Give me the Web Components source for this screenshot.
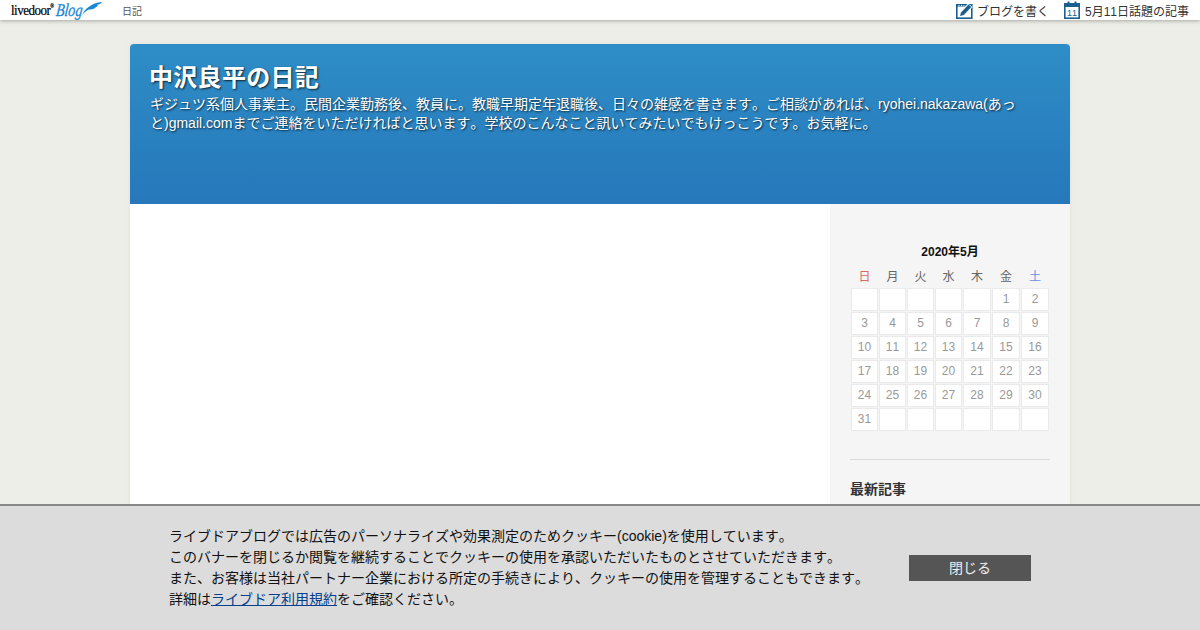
<!DOCTYPE html>
<html lang="ja">
<head>
<meta charset="utf-8">
<title>中沢良平の日記</title>
<style>
html, body { margin: 0; height: 100%; overflow: hidden; }
body {
    background: #eeeee8;
    font-family: "Liberation Sans", "Noto Sans CJK JP", sans-serif;
    font-kerning: none;
    color: #333;
}
</style>
</head>
<body>
<top-bar></top-bar>
<blog-page>
    <blog-header slot="header" title="中沢良平の日記">ギジュツ系個人事業主。民間企業勤務後、教員に。教職早期定年退職後、日々の雑感を書きます。ご相談があれば、ryohei.nakazawa(あっと)gmail.comまでご連絡をいただければと思います。学校のこんなこと訊いてみたいでもけっこうです。お気軽に。</blog-header>
    <blog-sidebar slot="side">
        <blog-calendar month="2020年5月" offset="5" days="31"></blog-calendar>
        <recent-title>最新記事</recent-title>
    </blog-sidebar>
</blog-page>
<cookie-banner>
    ライブドアブログでは広告のパーソナライズや効果測定のためクッキー(cookie)を使用しています。<br>
    このバナーを閉じるか閲覧を継続することでクッキーの使用を承認いただいたものとさせていただきます。<br>
    また、お客様は当社パートナー企業における所定の手続きにより、クッキーの使用を管理することもできます。<br>
    詳細は<a href="#" style="color:#003f8e">ライブドア利用規約</a>をご確認ください。
</cookie-banner>
<script>
class TopBar extends HTMLElement {
    constructor() {
        super();
        this.attachShadow({ mode: "open" });
    }
    connectedCallback() {
        this.shadowRoot.innerHTML = `
<style>
:host {
    display: flex;
    align-items: center;
    height: 20px;
    background: #fff;
    box-shadow: 0 1px 4px rgba(0, 0, 0, 0.3);
    position: relative;
    font-size: 12px;
    color: #333;
}
.logo { display: flex; align-items: center; margin-left: 11px; width: 111px; }
.ld { width: 45px; font-family: "Liberation Serif", serif; font-size: 13px; color: #000; letter-spacing: -0.5px; -webkit-text-stroke: 0.2px #000; transform: scaleY(1.15); }
.ld sup { font-size: 5px; line-height: 0; }
.bl { width: 26px; font-family: "Liberation Serif", serif; font-style: italic; font-size: 18px; color: #1a86d6; -webkit-text-stroke: 0.3px #1a86d6; transform: scaleX(0.78) skewX(-8deg); transform-origin: left center; }
.crumb { font-size: 10px; color: #555; }
.right { margin-left: auto; display: flex; align-items: center; gap: 15px; padding-right: 11px; }
.act { display: flex; align-items: center; gap: 4px; }
.act + .act { gap: 5px; }
svg { display: block; }
.logo svg { margin-top: -4px; }
</style>
<div class="logo">
    <span class="ld">livedoor<sup>®</sup></span><span class="bl">Blog</span>
    <svg width="20" height="13" viewBox="0 0 20 13"><path d="M0 13C3 7 9 1 20 0c-1 2-3 2.500-4.500 2.500 .5 1 0 2-2 3-1 1.500-4 2-6.500 2-2 1-4.500 2.500-7 5.500z" fill="#1a86d6"/></svg>
</div>
<span class="crumb">日記</span>
<div class="right">
    <div class="act">
        <svg width="17" height="17" viewBox="0 0 17 17"><rect x="0.8" y="2.8" width="15" height="13.400" fill="#fff" stroke="#1a5f8f" stroke-width="1.6"/><path d="M1 2h11v2.500H1z" fill="#1a5f8f"/><path d="M3 4v-1M5.500 4v-1M8 4v-1" stroke="#fff" stroke-width="1"/><path d="M2.500 15l1-4.500L12 1.500l4.500 3.500-8.500 9z" fill="#fff"/><path d="M4 14l1-3.500 7.500-8 2.800 2.500-7.500 8z" fill="#1a5f8f"/></svg>
        <span>ブログを書く</span>
    </div>
    <div class="act">
        <svg width="16" height="18" viewBox="0 0 16 18"><rect x="0.8" y="2.800" width="14.400" height="14.400" fill="#fff" stroke="#1a5f8f" stroke-width="1.6"/><rect x="1" y="3" width="14" height="3" fill="#1a5f8f"/><rect x="3.500" y="0.500" width="2" height="3" fill="#1a5f8f"/><rect x="10.500" y="0.500" width="2" height="3" fill="#1a5f8f"/><text x="8" y="15" text-anchor="middle" font-family="Liberation Sans, sans-serif" font-size="9" fill="#1a5f8f">11</text></svg>
        <span>5月11日話題の記事</span>
    </div>
</div>`;
    }
}

class BlogPage extends HTMLElement {
    constructor() {
        super();
        this.attachShadow({ mode: "open" });
        this.shadowRoot.innerHTML = `
<style>
:host { display: block; width: 940px; margin: 24px auto 0; box-shadow: 0 0 6px rgba(0,0,0,0.06); }
.cols { display: flex; height: 426px; }
main { width: 700px; background: #fff; }
aside { width: 240px; background: #f5f5f5; }
</style>
<slot name="header"></slot>
<div class="cols"><main></main><aside><slot name="side"></slot></aside></div>`;
    }
}

class BlogHeader extends HTMLElement {
    constructor() {
        super();
        this.attachShadow({ mode: "open" });
    }
    connectedCallback() {
        this.shadowRoot.innerHTML = `
<style>
:host {
    display: block;
    box-sizing: border-box;
    height: 160px;
    padding: 17px 50px 0 20px;
    border-radius: 4px 4px 0 0;
    background: linear-gradient(#2e8dc6, #2678ba);
    color: #fff;
    text-shadow: 1px 1px 2px rgba(0, 0, 0, 0.75);
}
h1 { margin: 0 0 0 -1px; font-size: 24px; line-height: 34px; font-weight: bold; letter-spacing: 0.3px; }
p { margin: 0; font-size: 14px; line-height: 19px; }
</style>
<h1>${this.getAttribute("title")}</h1>
<p><slot></slot></p>`;
    }
}

class BlogSidebar extends HTMLElement {
    constructor() {
        super();
        this.attachShadow({ mode: "open" });
        this.shadowRoot.innerHTML = `
<style>:host { display: block; padding: 40px 20px 0; }</style>
<slot></slot>`;
    }
}

class BlogCalendar extends HTMLElement {
    constructor() {
        super();
        this.attachShadow({ mode: "open" });
    }
    connectedCallback() {
        const offset = Number(this.getAttribute("offset"));
        const days = Number(this.getAttribute("days"));
        let cells = "";
        for (let i = 0; i < 42; i++) {
            const d = i - offset + 1;
            cells += `<div class="cell">${d > 0 && d <= days ? d : ""}</div>`;
        }
        this.shadowRoot.innerHTML = `
<style>
:host { display: block; padding-bottom: 28px; border-bottom: 1px solid #ddd; color: #999; font-size: 12px; }
.title { text-align: center; font-weight: bold; color: #111; line-height: 16px; margin-bottom: 9px; }
.week, .grid { display: grid; grid-template-columns: repeat(4, 27px) repeat(3, 28px); column-gap: 1px; margin-left: 1px; }
.week { line-height: 16px; text-align: center; color: #666; margin-bottom: 3px; }
.sun { color: #d66; }
.sat { color: #6a8fe0; }
.grid { row-gap: 1px; grid-auto-rows: 23px; }
.cell { background: #fff; border: 1px solid #eaeaea; box-sizing: border-box; text-align: center; line-height: 21px; }
</style>
<div class="title">${this.getAttribute("month")}</div>
<div class="week"><span class="sun">日</span><span>月</span><span>火</span><span>水</span><span>木</span><span>金</span><span class="sat">土</span></div>
<div class="grid">${cells}</div>`;
    }
}

class RecentTitle extends HTMLElement {
    constructor() {
        super();
        this.attachShadow({ mode: "open" });
        this.shadowRoot.innerHTML = `
<style>:host { display: block; margin-top: 19px; font-size: 14px; font-weight: bold; line-height: 20px; color: #333; }</style>
<slot></slot>`;
    }
}

class CookieBanner extends HTMLElement {
    constructor() {
        super();
        this.attachShadow({ mode: "open" });
        this.shadowRoot.innerHTML = `
<style>
:host {
    position: fixed;
    left: 0; right: 0; bottom: 0;
    height: 124px;
    display: flex;
    align-items: center;
    background: #dcdcdc;
    border-top: 2px solid #888;
    color: #111;
    font-size: 14px;
    line-height: 21px;
}
.msg { margin-left: 169px; width: 740px; }
button {
    width: 122px;
    height: 26px;
    padding: 0 0 3px;
    border: 0;
    background: #555;
    color: #eee;
    font: 14px "Liberation Sans", "Noto Sans CJK JP", sans-serif;
}
</style>
<div class="msg"><slot></slot></div>
<button>閉じる</button>`;
    }
}

customElements.define("top-bar", TopBar);
customElements.define("blog-page", BlogPage);
customElements.define("blog-header", BlogHeader);
customElements.define("blog-sidebar", BlogSidebar);
customElements.define("blog-calendar", BlogCalendar);
customElements.define("recent-title", RecentTitle);
customElements.define("cookie-banner", CookieBanner);
</script>
</body>
</html>
